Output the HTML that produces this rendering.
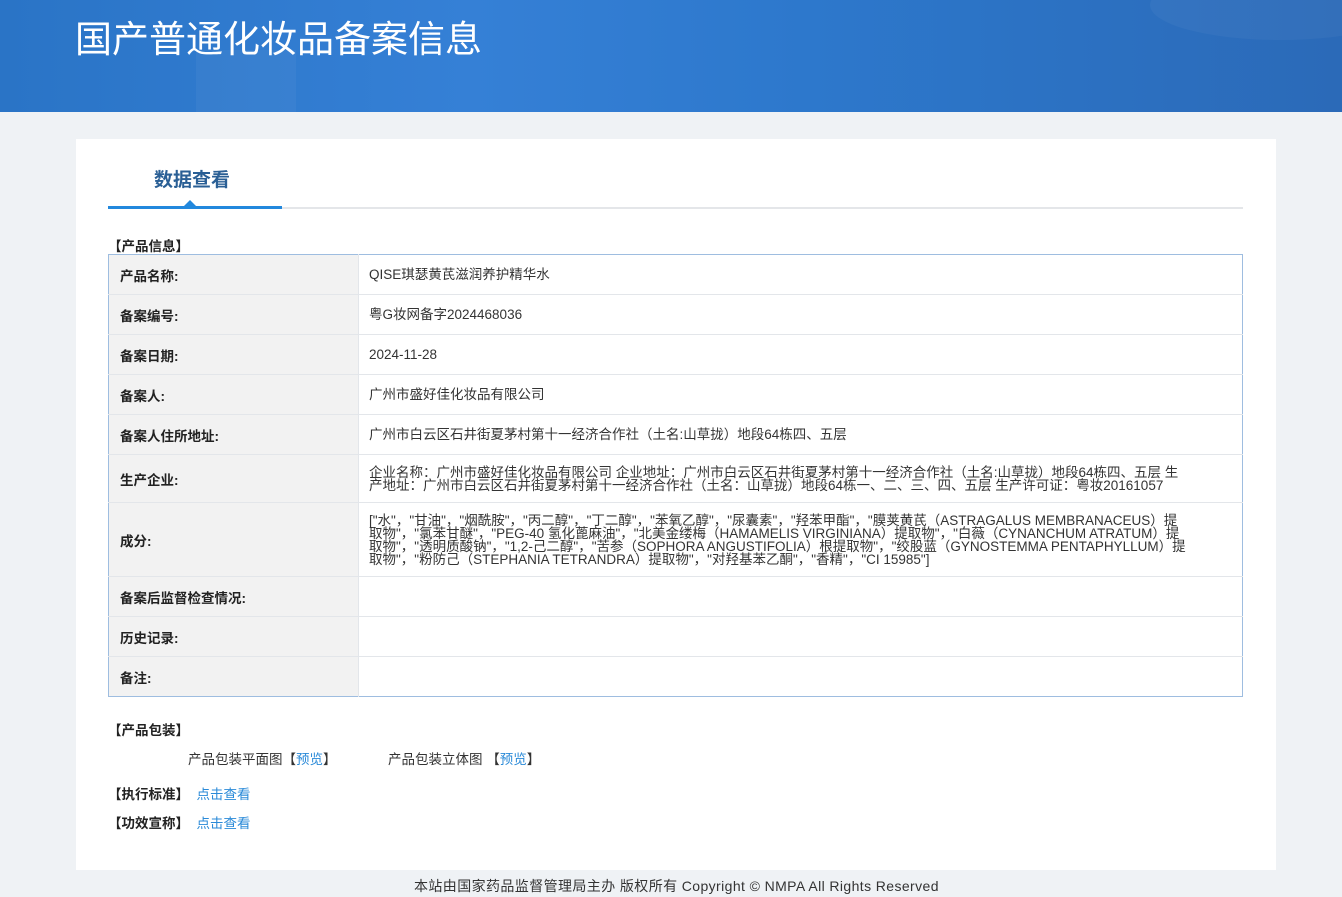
<!DOCTYPE html>
<html><head><meta charset="utf-8"><style>
*{margin:0;padding:0;box-sizing:border-box}
body{width:1342px;height:897px;background:#eff2f5;font-family:"Liberation Sans","Noto Sans CJK SC",sans-serif;color:#333;overflow:hidden;position:relative}
.hd{position:absolute;left:0;top:0;width:1342px;height:112px;background:linear-gradient(90deg,#2a74c6 0%,#3580d6 35%,#2d78cc 60%,#2b6ab8 100%);overflow:hidden}
.hd .b1{position:absolute;left:196px;top:50px;width:100px;height:62px;background:rgba(255,255,255,.04)}
.hd .b2{position:absolute;left:1150px;top:-30px;width:260px;height:70px;background:rgba(255,255,255,.04);border-radius:50%}
.hd h1{position:absolute;left:75px;top:9px;font-size:37px;font-weight:normal;color:#fff;font-family:"Noto Sans CJK SC",sans-serif}
.card{position:absolute;left:76px;top:139px;width:1200px;height:731px;background:#fff}
.tab{position:absolute;left:32px;top:68px;width:1135px;height:2px;background:#e4e6e9}
.tab .a{position:absolute;left:0;top:-1px;width:174px;height:3px;background:#2288dd}
.tab .t{position:absolute;left:76px;top:-7px;width:0;height:0;border-left:6px solid transparent;border-right:6px solid transparent;border-bottom:6px solid #2288dd}
.tt{position:absolute;left:78px;top:26px;font-size:19px;font-weight:bold;color:#2a5f95}
.sec{position:absolute;font-size:13.5px;font-weight:bold;color:#222}
table{position:absolute;left:32px;top:115px;width:1135px;border-collapse:collapse;border:1px solid #9ebde0;font-size:13.5px}
td{border-bottom:1px solid #e3e6ea;height:40px;vertical-align:middle}
td.l{width:250px;background:#f2f2f2;font-weight:bold;padding-left:11px;color:#222;border-right:1px solid #e3e6ea}
td.v{padding:0 56px 0 10px;line-height:13px;color:#333}
.lk{color:#2a8ad8}
.ft{position:absolute;top:876px;left:414px;width:600px;font-size:14px;color:#333;letter-spacing:0.4px;white-space:nowrap}
</style></head><body>
<div class="hd"><div class="b2"></div><div class="b1"></div><h1>国产普通化妆品备案信息</h1></div>
<div class="card">
<div class="tt">数据查看</div>
<div class="tab"><div class="a"></div><div class="t"></div></div>
<div class="sec" style="left:32px;top:96px">【产品信息】</div>
<table>
<tr><td class="l">产品名称:</td><td class="v">QISE琪瑟黄芪滋润养护精华水</td></tr>
<tr><td class="l">备案编号:</td><td class="v">粤G妆网备字2024468036</td></tr>
<tr><td class="l">备案日期:</td><td class="v">2024-11-28</td></tr>
<tr><td class="l">备案人:</td><td class="v">广州市盛好佳化妆品有限公司</td></tr>
<tr><td class="l">备案人住所地址:</td><td class="v">广州市白云区石井街夏茅村第十一经济合作社（土名:山草拢）地段64栋四、五层</td></tr>
<tr><td class="l" style="height:48px">生产企业:</td><td class="v">企业名称：广州市盛好佳化妆品有限公司 企业地址：广州市白云区石井街夏茅村第十一经济合作社（土名:山草拢）地段64栋四、五层 生产地址：广州市白云区石井街夏茅村第十一经济合作社（土名：山草拢）地段64栋一、二、三、四、五层 生产许可证：粤妆20161057</td></tr>
<tr><td class="l" style="height:74px">成分:</td><td class="v">["水"，"甘油"，"烟酰胺"，"丙二醇"，"丁二醇"，"苯氧乙醇"，"尿囊素"，"羟苯甲酯"，"膜荚黄芪（ASTRAGALUS MEMBRANACEUS）提取物"，"氯苯甘醚"，"PEG-40 氢化蓖麻油"，"北美金缕梅（HAMAMELIS VIRGINIANA）提取物"，"白薇（CYNANCHUM ATRATUM）提取物"，"透明质酸钠"，"1,2-己二醇"，"苦参（SOPHORA ANGUSTIFOLIA）根提取物"，"绞股蓝（GYNOSTEMMA PENTAPHYLLUM）提取物"，"粉防己（STEPHANIA TETRANDRA）提取物"，"对羟基苯乙酮"，"香精"，"CI 15985"]</td></tr>
<tr><td class="l">备案后监督检查情况:</td><td class="v"></td></tr>
<tr><td class="l">历史记录:</td><td class="v"></td></tr>
<tr><td class="l" style="border-bottom:none">备注:</td><td class="v" style="border-bottom:none"></td></tr>
</table>
<div class="sec" style="left:32px;top:580px">【产品包装】</div>
<div style="position:absolute;left:112px;top:609px;font-size:13.5px">产品包装平面图【<span class="lk">预览</span>】</div>
<div style="position:absolute;left:312px;top:609px;font-size:13.5px">产品包装立体图 【<span class="lk">预览</span>】</div>
<div class="sec" style="left:32px;top:644px">【执行标准】 &nbsp;<span class="lk" style="font-weight:normal">点击查看</span></div>
<div class="sec" style="left:32px;top:673px">【功效宣称】 &nbsp;<span class="lk" style="font-weight:normal">点击查看</span></div>
</div>
<div class="ft">本站由国家药品监督管理局主办 版权所有 Copyright © NMPA All Rights Reserved</div>
</body></html>
